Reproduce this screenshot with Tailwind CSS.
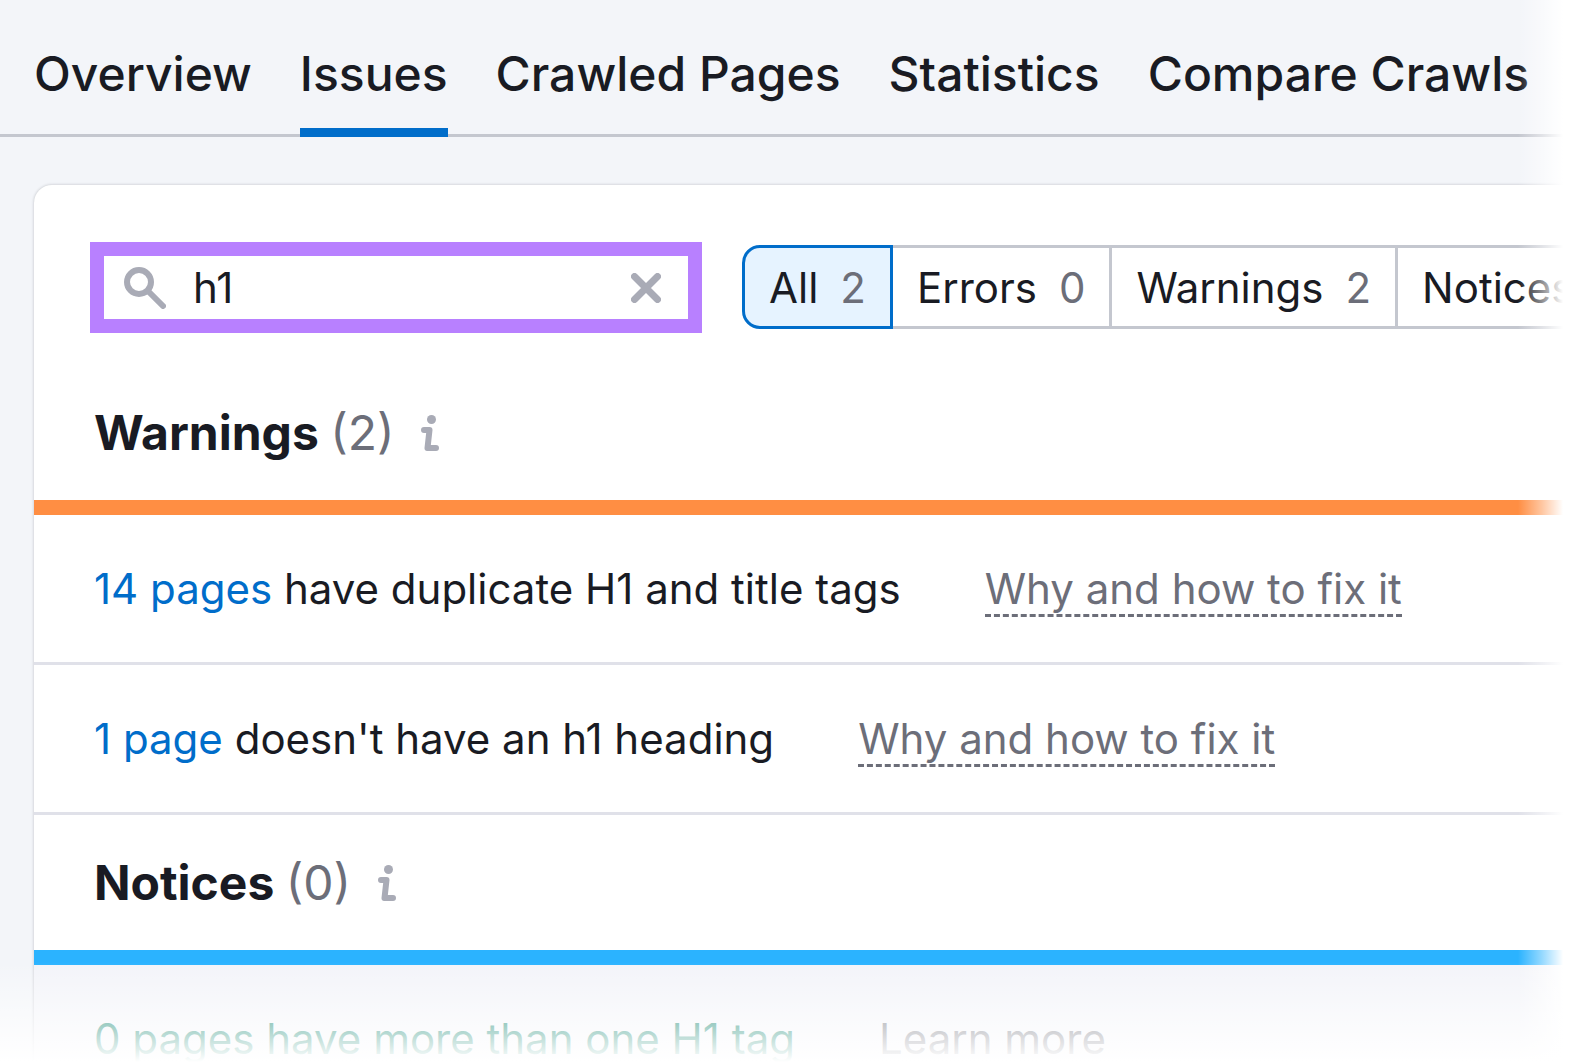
<!DOCTYPE html>
<html lang="en">
<head>
  <meta charset="UTF-8" />
  <meta name="viewport" content="width=device-width, initial-scale=1" />
  <title>Site Audit - Issues</title>
  <script src="https://cdn.jsdelivr.net/npm/@tailwindcss/browser@4"></script>
</head>
<body class="bg-[#f3f5f9] font-['Inter',sans-serif] text-[#191b23]">
  <div class="relative h-screen overflow-hidden">

    <nav class="flex gap-12 border-b-3 border-[#c4c7cf] px-[34px] pt-[44px] text-5xl leading-[60px] font-medium whitespace-nowrap">
      <a href="#overview" class="pb-[30px]">Overview</a>
      <a href="#issues" aria-current="page" class="-mb-[3px] border-b-9 border-[#006dca] pb-[24px]">Issues</a>
      <a href="#crawled" class="pb-[30px]">Crawled Pages</a>
      <a href="#statistics" class="pb-[30px]">Statistics</a>
      <a href="#compare" class="pb-[30px]">Compare Crawls</a>
    </nav>

    <main class="mt-12 ml-[34px] rounded-tl-[18px] bg-white text-[42px] leading-[63px] whitespace-nowrap shadow-[0_0_3px_rgba(25,27,35,0.25)]">
      <div class="flex items-center gap-10 overflow-hidden pt-[57px] pl-14">
        <form class="flex w-[612px] shrink-0 items-center border-14 border-[#b880ff] bg-white pr-[27px] pl-5">
          <svg class="size-[42px] shrink-0" viewBox="0 0 42 42" fill="none" stroke="#a9abb6" stroke-width="6" stroke-linecap="round"><circle cx="15" cy="15" r="12"/><path d="M24 24L39 39"/></svg>
          <input type="text" value="h1" aria-label="Search issues" class="ml-[27px] h-[63px] min-w-0 flex-1 outline-none" />
          <button type="reset" aria-label="Clear search">
            <svg class="size-[30px]" viewBox="0 0 30 30" fill="none" stroke="#a9abb6" stroke-width="7" stroke-linecap="round"><path d="M3.500 3.500L26.500 26.500M26.500 3.500L3.500 26.500"/></svg>
          </button>
        </form>

        <div role="group" aria-label="Issue type" class="mb-px flex h-[84px] shrink-0">
          <button type="button" aria-pressed="true" class="flex items-center gap-[22px] rounded-l-[18px] border-3 border-[#006dca] bg-[#e6f3ff] px-6">All <span class="text-[#6c6e79]">2</span></button>
          <button type="button" class="flex items-center gap-[22px] border-y-3 border-r-3 border-[#c4c7cf] px-6">Errors <span class="text-[#6c6e79]">0</span></button>
          <button type="button" class="flex items-center gap-[22px] border-y-3 border-r-3 border-[#c4c7cf] px-6">Warnings <span class="text-[#6c6e79]">2</span></button>
          <button type="button" class="flex items-center gap-[22px] rounded-r-[18px] border-y-3 border-r-3 border-[#c4c7cf] px-6">Notices <span class="text-[#6c6e79]">0</span></button>
        </div>
      </div>

      <section class="pt-8">
        <header class="flex h-[150px] items-center border-b-15 border-[#ff8e43] pl-[60px]">
          <h2 class="text-5xl font-bold">Warnings <span class="font-normal text-[#6c6e79]">(2)</span></h2>
          <button type="button" aria-label="About warnings" class="ml-[27px]">
            <svg class="h-9 w-[18px]" viewBox="0 0 18 36" fill="none" stroke="#a9abb6" stroke-width="6" stroke-linecap="round" stroke-linejoin="round"><circle cx="10.500" cy="4.500" r="4.500" fill="#a9abb6" stroke="none"/><path d="M3 15H8.500L6.500 33H15"/></svg>
          </button>
        </header>
        <ul>
          <li class="flex h-[150px] items-center gap-[84px] border-b-3 border-[#e0e1e9] pl-[60px]">
            <p><a href="#duplicate-h1" class="text-[#006dca]">14 pages</a> have duplicate H1 and title tags</p>
            <button type="button" class="mt-0.5 border-b-3 border-dashed border-[#6c6e79] leading-[51px] text-[#6c6e79]">Why and how to fix it</button>
          </li>
          <li class="flex h-[150px] items-center gap-[84px] border-b-3 border-[#e0e1e9] pl-[60px]">
            <p><a href="#missing-h1" class="text-[#006dca]">1 page</a> doesn't have an h1 heading</p>
            <button type="button" class="mt-0.5 border-b-3 border-dashed border-[#6c6e79] leading-[51px] text-[#6c6e79]">Why and how to fix it</button>
          </li>
        </ul>
      </section>

      <section>
        <header class="flex h-[150px] items-center border-b-15 border-[#2bb3ff] pl-[60px]">
          <h2 class="text-5xl font-bold">Notices <span class="font-normal text-[#6c6e79]">(0)</span></h2>
          <button type="button" aria-label="About notices" class="ml-[27px]">
            <svg class="h-9 w-[18px]" viewBox="0 0 18 36" fill="none" stroke="#a9abb6" stroke-width="6" stroke-linecap="round" stroke-linejoin="round"><circle cx="10.500" cy="4.500" r="4.500" fill="#a9abb6" stroke="none"/><path d="M3 15H8.500L6.500 33H15"/></svg>
          </button>
        </header>
        <ul>
          <li class="flex h-[150px] items-center gap-[84px] border-b-3 border-[#e0e1e9] bg-[#f3f4f9] pl-[60px]">
            <p class="text-[#007c65]">0 pages have more than one H1 tag</p>
            <button type="button" class="text-[#6c6e79]">Learn more</button>
          </li>
        </ul>
      </section>
    </main>

    <!-- edge fades -->
    <div class="pointer-events-none absolute inset-y-0 right-0 w-[60px] bg-linear-to-r from-white/0 from-10% via-white/50 via-50% to-white to-85%"></div>
    <div class="pointer-events-none absolute inset-x-0 bottom-0 h-[100px] bg-linear-to-b from-white/0 to-white"></div>
  </div>
</body>
</html>
